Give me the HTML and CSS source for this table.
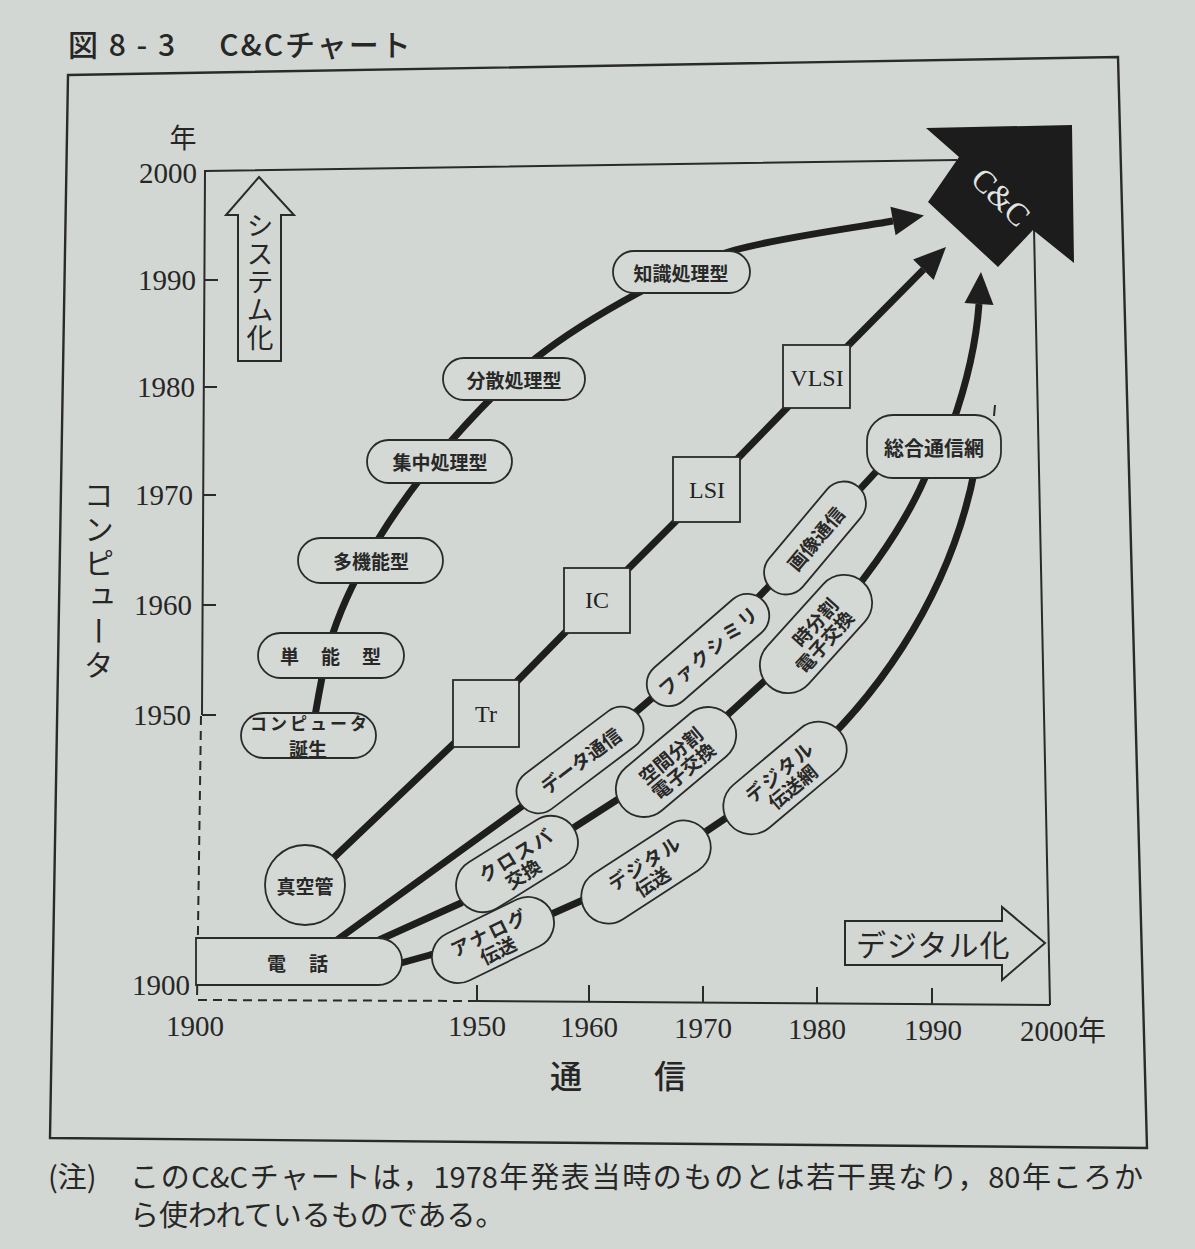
FILE: index.html
```html
<!DOCTYPE html>
<html lang="ja">
<head>
<meta charset="utf-8">
<title>C&amp;Cチャート</title>
<link rel="stylesheet" href="styles.css">
</head>
<body>
<div class="page">
  <h1 class="title">図 8 - 3<span class="title-name">C&amp;Cチャート</span></h1>
  <svg class="chart" xmlns="http://www.w3.org/2000/svg" width="1195" height="1104" viewBox="0 50 1195 1104">
    <!-- frames and axes -->
    <polygon class="outer" points="68,75 1118,57 1147,1148 50,1138"/>
    <polyline class="axis" points="957,160 205,171 202,715"/>
    <line class="axis" x1="1034" y1="228" x2="1050" y2="1005"/>
    <line class="axis" x1="477" y1="1001" x2="1050" y2="1005"/>
    <polyline class="dash" points="201,716 197,1000 477,1001"/>
    <path class="axis" d="M205,280 H218 M204,387 H217 M203,495 H216 M203,605 H216 M202,715 H216 M477,1001 V985 M589,1001 V985 M703,1002 V986 M817,1003 V987 M932,1004 V988"/>
    <line class="axis" x1="995" y1="405" x2="994" y2="416"/>

    <!-- axis labels -->
    <text class="jp yr" x="183" y="136">年</text>
    <text class="num num-r" x="197" y="183">2000</text>
    <text class="num num-r" x="196" y="290">1990</text>
    <text class="num num-r" x="195" y="397">1980</text>
    <text class="num num-r" x="193" y="505">1970</text>
    <text class="num num-r" x="192" y="615">1960</text>
    <text class="num num-r" x="191" y="725">1950</text>
    <text class="num num-r" x="190" y="995">1900</text>
    <text class="num num-c" x="195" y="1036">1900</text>
    <text class="num num-c" x="477" y="1036">1950</text>
    <text class="num num-c" x="589" y="1037">1960</text>
    <text class="num num-c" x="703" y="1038">1970</text>
    <text class="num num-c" x="817" y="1039">1980</text>
    <text class="num num-c" x="933" y="1040">1990</text>
    <text class="num" x="1020" y="1041">2000<tspan class="nen">年</tspan></text>
    <text class="jp tsushin" x="550" y="1074">通信</text>
    <text class="jp vert vert-c" x="99" y="480">コンピュータ</text>

    <!-- システム化 arrow -->
    <polygon class="outline" points="259,177 294,215 281,215 281,361 238,361 238,215 226,215"/>
    <text class="jp vert vert-s" x="260" y="212">システム化</text>

    <!-- デジタル化 arrow -->
    <polygon class="outline" points="845,921 1002,921 1002,907 1045,943 1002,980 1002,965 845,965"/>
    <text class="jp digi" x="856" y="943">デジタル化</text>

    <!-- C&C big arrow -->
    <polygon class="cc-arrow" points="926,128 1072,125 1074,263 1033,230 998,267 928,202 959,157"/>
    <text class="cc" transform="translate(1001,197) rotate(45)">C&amp;C</text>

    <!-- thick lines -->
    <path class="thick" d="M310,745 C313.8,726.3 321.5,667.5 333,633 C344.5,598.5 359.2,570.2 379,538 C398.8,505.8 425.8,470 452,440 C478.2,410 505,382.5 536,358 C567,333.5 604.8,311 638,293 C671.2,275 692.5,262 735,250 C777.5,238 866.7,225.8 893,221"/>
    <polygon class="head" points="924,215.4 895.6,235.3 890.4,206.7"/>
    <path class="thick" d="M305,885 L486,713 L597,600 L707,490 L817,377 L923.4,269.6"/>
    <polygon class="head" points="946,247 933.6,279.9 913.1,259.4"/>
    <path class="thick" d="M337,940 L521,807 L580,760 L708,650 L815,538 L885,462"/>
    <path class="thick" d="M379,940 L461,903 L517,864 L676,762 L816,634 C850,600 905,530 929,468"/>
    <path class="thick" d="M401,963 L430,955 L493,940 L646,872 L785,778 C870,710 950,600 975,468"/>
    <path class="thick" d="M952,425 Q975,360 979,304"/>
    <polygon class="head" points="981,272 993.5,304.9 964.5,303.1"/>

    <!-- computer nodes -->
    <rect class="node" x="613" y="251" width="137" height="42" rx="21"/>
    <text class="pt" x="681" y="272">知識処理型</text>
    <rect class="node" x="443" y="358" width="142" height="42" rx="21"/>
    <text class="pt" x="514" y="379">分散処理型</text>
    <rect class="node" x="367" y="440" width="145" height="43" rx="21.5"/>
    <text class="pt" x="440" y="461.5">集中処理型</text>
    <rect class="node" x="298" y="538" width="145" height="45" rx="22.5"/>
    <text class="pt" x="371" y="560.5">多機能型</text>
    <rect class="node" x="258" y="633" width="146" height="45" rx="22.5"/>
    <text class="pt wide3" x="280" y="655.5">単能型</text>
    <rect class="node" x="241" y="713" width="135" height="45" rx="22.5"/>
    <text class="pt small" x="310" y="722">コンピュータ</text>
    <text class="pt" x="308" y="748">誕生</text>

    <!-- technology nodes -->
    <circle class="node" cx="305" cy="885" r="40"/>
    <text class="pt" x="305" y="885">真空管</text>
    <rect class="node" x="453" y="680" width="66" height="67"/>
    <text class="bt" x="486" y="722">Tr</text>
    <rect class="node" x="564" y="568" width="66" height="65"/>
    <text class="bt" x="597" y="608">IC</text>
    <rect class="node" x="673" y="457" width="67" height="65"/>
    <text class="bt" x="707" y="498">LSI</text>
    <rect class="node" x="783" y="345" width="67" height="63"/>
    <text class="bt" x="817" y="386">VLSI</text>

    <!-- communication nodes -->
    <path class="node" d="M196,938 H378 A24,23.5 0 0 1 378,985 H196 Z"/>
    <text class="pt denwa" x="267" y="962">電話</text>
    <rect class="node" x="867" y="415" width="134" height="63" rx="26"/>
    <text class="pt big" x="934" y="447">総合通信網</text>

    <g transform="translate(815,538) rotate(-50)">
      <rect class="node" x="-67" y="-22" width="134" height="44" rx="22"/>
      <text class="pt" x="0" y="0">画像通信</text>
    </g>
    <g transform="translate(708,650) rotate(-41)">
      <rect class="node" x="-74" y="-22" width="148" height="44" rx="22"/>
      <text class="pt kana" x="0" y="0">ファクシミリ</text>
    </g>
    <g transform="translate(580,760) rotate(-37)">
      <rect class="node" x="-74" y="-22" width="148" height="44" rx="22"/>
      <text class="pt" x="0" y="0">データ通信</text>
    </g>
    <g transform="translate(816,634) rotate(-48)">
      <rect class="node" x="-70" y="-28" width="140" height="56" rx="28"/>
      <text class="pt"><tspan x="8" y="-10">時分割</tspan><tspan x="0" y="10">電子交換</tspan></text>
    </g>
    <g transform="translate(676,762) rotate(-40)">
      <rect class="node" x="-70" y="-28" width="140" height="56" rx="28"/>
      <text class="pt"><tspan x="0" y="-10">空間分割</tspan><tspan x="0" y="10">電子交換</tspan></text>
    </g>
    <g transform="translate(785,778) rotate(-40)">
      <rect class="node" x="-72" y="-28" width="144" height="56" rx="28"/>
      <text class="pt"><tspan class="kana" x="0" y="-10">デジタル</tspan><tspan x="0" y="10">伝送網</tspan></text>
    </g>
    <g transform="translate(517,864) rotate(-32)">
      <rect class="node" x="-67" y="-27" width="134" height="54" rx="27"/>
      <text class="pt"><tspan class="kana" x="4" y="-10">クロスバ</tspan><tspan x="0" y="10">交換</tspan></text>
    </g>
    <g transform="translate(646,872) rotate(-33)">
      <rect class="node" x="-72" y="-27" width="144" height="54" rx="27"/>
      <text class="pt"><tspan class="kana" x="4" y="-10">デジタル</tspan><tspan x="0" y="10">伝送</tspan></text>
    </g>
    <g transform="translate(493,940) rotate(-26)">
      <rect class="node" x="-65" y="-26" width="130" height="52" rx="26"/>
      <text class="pt"><tspan class="kana" x="0" y="-10">アナログ</tspan><tspan x="0" y="10">伝送</tspan></text>
    </g>
  </svg>
  <div class="note">
    <span class="note-label">(注)</span>
    <div class="note-body">
      <span class="line1">このC&amp;Cチャートは，1978年発表当時のものとは若干異なり，80年ころか</span>
      <span class="line2">ら使われているものである。</span>
    </div>
  </div>
</div>
</body>
</html>
```

FILE: styles.css
```css
html, body {
  margin: 0;
  padding: 0;
  background: #d3d7d3;
}

body {
  font-family: "Noto Sans CJK JP", "Noto Sans", sans-serif;
  color: #272727;
}

.page {
  width: 1195px;
  height: 1249px;
  display: flex;
  flex-direction: column;
  overflow: hidden;
}

.title {
  margin: 0;
  padding: 24px 0 0 68px;
  height: 26px;
  font-size: 30px;
  line-height: 38px;
  font-weight: 500;
  letter-spacing: 2px;
  white-space: pre;
  flex: none;
}

.title-name {
  margin-left: 42px;
  letter-spacing: 2px;
}

.chart {
  display: block;
  flex: none;
}

.note {
  display: flex;
  padding: 2px 0 0 48px;
  font-size: 29px;
  line-height: 38px;
}

.note-label {
  width: 82px;
  flex: none;
}

.note-body {
  display: flex;
  flex-direction: column;
}

.line1 {
  display: block;
  width: 1013px;
  text-align: justify;
  text-align-last: justify;
}

.line2 {
  display: block;
}

/* ---- chart drawing ---- */
.outer {
  fill: none;
  stroke: #2a2a2a;
  stroke-width: 2.4;
}

.axis {
  fill: none;
  stroke: #2a2a2a;
  stroke-width: 2;
}

.dash {
  fill: none;
  stroke: #2a2a2a;
  stroke-width: 2;
  stroke-dasharray: 9 6;
}

.outline {
  fill: none;
  stroke: #2a2a2a;
  stroke-width: 2;
  stroke-linejoin: miter;
}

.thick {
  fill: none;
  stroke: #1e1e1e;
  stroke-width: 7;
  stroke-linejoin: round;
}

.head {
  fill: #1e1e1e;
}

.cc-arrow {
  fill: #1c1c1c;
}

.node {
  fill: #d5d9d5;
  stroke: #2a2a2a;
  stroke-width: 1.8;
}

.num {
  font-family: "Liberation Serif", "DejaVu Serif", serif;
  font-size: 29px;
  fill: #262626;
}

.num-r {
  text-anchor: end;
}

.num-c {
  text-anchor: middle;
}

.nen {
  font-family: "Noto Sans CJK JP", sans-serif;
  font-size: 28px;
}

.jp {
  font-family: "Noto Sans CJK JP", sans-serif;
  fill: #262626;
}

.yr {
  font-size: 27px;
  text-anchor: middle;
  dominant-baseline: central;
}

.tsushin {
  font-size: 32px;
  font-weight: 500;
  letter-spacing: 72px;
  dominant-baseline: central;
}

.vert {
  writing-mode: vertical-rl;
  text-orientation: upright;
}

.vert-c {
  font-size: 30px;
  letter-spacing: 4px;
}

.vert-s {
  font-size: 27px;
  letter-spacing: 1px;
}

.digi {
  font-size: 30px;
  letter-spacing: 1px;
  dominant-baseline: central;
}

.cc {
  font-family: "Liberation Serif", "DejaVu Serif", serif;
  font-size: 32px;
  fill: #e2e4e2;
  text-anchor: middle;
  dominant-baseline: central;
}

.pt {
  font-family: "Noto Sans CJK JP", sans-serif;
  font-weight: 700;
  font-size: 19px;
  fill: #282828;
  text-anchor: middle;
  dominant-baseline: central;
}

.pt.kana,
.pt .kana {
  letter-spacing: 2px;
}

.pt.small {
  font-size: 17px;
  letter-spacing: 3px;
}

.pt.big {
  font-size: 20px;
}

.pt.wide3 {
  text-anchor: start;
  letter-spacing: 22px;
}

.pt.denwa {
  text-anchor: start;
  letter-spacing: 23px;
}

.bt {
  font-family: "Liberation Serif", "DejaVu Serif", serif;
  font-size: 24px;
  fill: #222222;
  text-anchor: middle;
}
```
